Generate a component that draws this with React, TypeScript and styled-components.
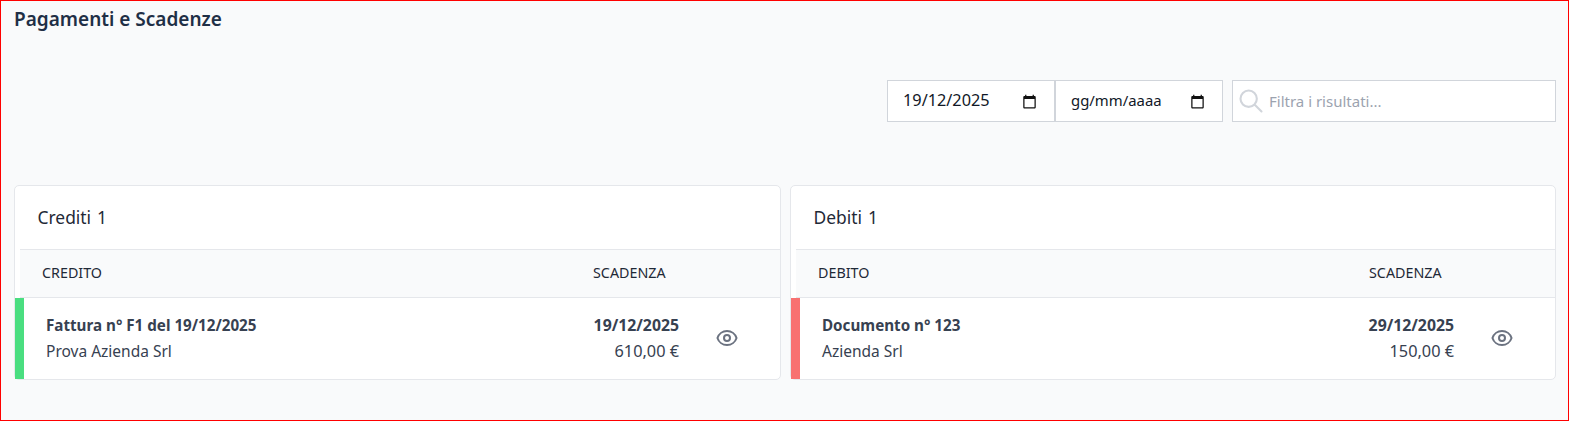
import styled, { createGlobalStyle } from 'styled-components';

const GlobalStyle = createGlobalStyle`
  * {
    box-sizing: border-box;
  }
  html,
  body {
    margin: 0;
    padding: 0;
    background: #f9fafb;
    font-family: 'Noto Sans', 'Open Sans', sans-serif;
  }
`;

const Page = styled.div`
  width: 1569px;
  height: 421px;
  border: 1px solid #ff0000;
  padding: 0 12px 0 13px;
  overflow: hidden;
  background: #f9fafb;
`;

const PageTitle = styled.h1`
  margin: 0;
  height: 79px;
  padding-top: 6px;
  font-size: 19px;
  line-height: 24px;
  font-weight: 600;
  color: #1f2f46;
`;

const Toolbar = styled.div`
  display: flex;
  justify-content: flex-end;
  height: 42px;
  margin-bottom: 63px;
`;

const DateField = styled.div<{ $empty?: boolean }>`
  width: 168px;
  height: 42px;
  display: flex;
  align-items: center;
  justify-content: space-between;
  padding: 0 17px 2px 15px;
  background: #fff;
  border: 1px solid #d1d5db;
  font-size: ${(props) => (props.$empty ? '14.9px' : '16.3px')};
  color: #111827;
`;

const SearchField = styled.div`
  width: 324px;
  height: 42px;
  margin-left: 9px;
  display: flex;
  align-items: center;
  gap: 4px;
  padding: 0 0 0 4px;
  background: #fff;
  border: 1px solid #d1d5db;
  font-size: 15px;
  color: #9ca3af;
`;

const SearchIcon = styled.svg`
  width: 28px;
  height: 28px;
  flex-shrink: 0;
  color: #d1d5db;
`;

const CalendarIcon = styled.svg`
  width: 15px;
  height: 15px;
  margin-top: 2px;
  color: #111;
`;

const Cards = styled.div`
  display: grid;
  grid-template-columns: 767px 766px;
  gap: 9px;
`;

const Card = styled.section`
  height: 195px;
  background: #fff;
  border: 1px solid #e5e7eb;
  border-radius: 5px;
`;

const CardTitle = styled.h2`
  margin: 0;
  height: 63px;
  padding: 0 0 2px 22.5px;
  display: flex;
  align-items: center;
  gap: 6px;
  font-size: 17.4px;
  font-weight: 400;
  color: #1f2937;
`;

const HeadRow = styled.div`
  height: 49px;
  margin-left: 5px;
  display: grid;
  grid-template-columns: 551px 1fr;
  align-items: center;
  padding: 0 0 2px 22px;
  background: #f9fafb;
  border-top: 1px solid #e5e7eb;
  border-bottom: 1px solid #e5e7eb;
  font-size: 14.3px;
  color: #1f2937;
`;

const BodyRow = styled.div<{ $accent: string }>`
  height: 81px;
  display: grid;
  grid-template-columns: 1fr auto 101px;
  align-items: center;
  padding: 0 0 2px 22px;
  border-left: 9px solid ${(props) => props.$accent};
  font-size: 15.5px;
  line-height: 24px;
  color: #374151;
`;

const Subject = styled.div`
  display: flex;
  flex-direction: column;
  gap: 2px;
`;

const Amounts = styled(Subject)`
  text-align: right;
  font-size: 16.3px;
`;

const Strong = styled.span`
  font-size: 15.2px;
  font-weight: 700;
`;

const DueDate = styled(Strong)`
  font-size: 15.8px;
`;

const EyeButton = styled.button`
  justify-self: start;
  width: 24px;
  height: 24px;
  margin: 0 0 0 36px;
  padding: 0;
  border: 0;
  background: none;
  color: #6b7280;
`;

const Eye = () => (
  <svg viewBox='0 0 24 24' width='24' height='24' fill='none' stroke='currentColor' strokeWidth='2'>
    <path strokeLinecap='round' strokeLinejoin='round' d='M15 12a3 3 0 11-6 0 3 3 0 016 0z' />
    <path
      strokeLinecap='round'
      strokeLinejoin='round'
      d='M2.458 12C3.732 7.943 7.523 5 12 5c4.478 0 8.268 2.943 9.542 7-1.274 4.057-5.064 7-9.542 7-4.477 0-8.268-2.943-9.542-7z'
    />
  </svg>
);

const Calendar = () => (
  <CalendarIcon viewBox='0 0 24 24' fill='currentColor'>
    <path d='M20 3h-1V1h-2v2H7V1H5v2H4c-1.1 0-2 .9-2 2v16c0 1.1.9 2 2 2h16c1.1 0 2-.9 2-2V5c0-1.1-.9-2-2-2zm0 18H4V8h16v13z' />
  </CalendarIcon>
);

const sections = [
  {
    title: 'Crediti',
    column: 'CREDITO',
    accent: '#4ade80',
    subject: 'Fattura n° F1 del 19/12/2025',
    company: 'Prova Azienda Srl',
    due: '19/12/2025',
    amount: '610,00 €',
  },
  {
    title: 'Debiti',
    column: 'DEBITO',
    accent: '#f87171',
    subject: 'Documento n° 123',
    company: 'Azienda Srl',
    due: '29/12/2025',
    amount: '150,00 €',
  },
];

const App = () => (
  <>
    <GlobalStyle />
    <Page>
      <PageTitle>Pagamenti e Scadenze</PageTitle>
      <Toolbar>
        <DateField>
          19/12/2025
          <Calendar />
        </DateField>
        <DateField $empty>
          gg/mm/aaaa
          <Calendar />
        </DateField>
        <SearchField>
          <SearchIcon viewBox='0 0 24 24' fill='none' stroke='currentColor' strokeWidth='1.8'>
            <path strokeLinecap='round' strokeLinejoin='round' d='M21 21l-6-6m2-5a7 7 0 11-14 0 7 7 0 0114 0z' />
          </SearchIcon>
          Filtra i risultati...
        </SearchField>
      </Toolbar>
      <Cards>
        {sections.map((section) => (
          <Card key={section.title}>
            <CardTitle>
              {section.title} <span>1</span>
            </CardTitle>
            <HeadRow>
              <span>{section.column}</span>
              <span>SCADENZA</span>
            </HeadRow>
            <BodyRow $accent={section.accent}>
              <Subject>
                <Strong>{section.subject}</Strong>
                <span>{section.company}</span>
              </Subject>
              <Amounts>
                <DueDate>{section.due}</DueDate>
                <span>{section.amount}</span>
              </Amounts>
              <EyeButton>
                <Eye />
              </EyeButton>
            </BodyRow>
          </Card>
        ))}
      </Cards>
    </Page>
  </>
);

export default App;
